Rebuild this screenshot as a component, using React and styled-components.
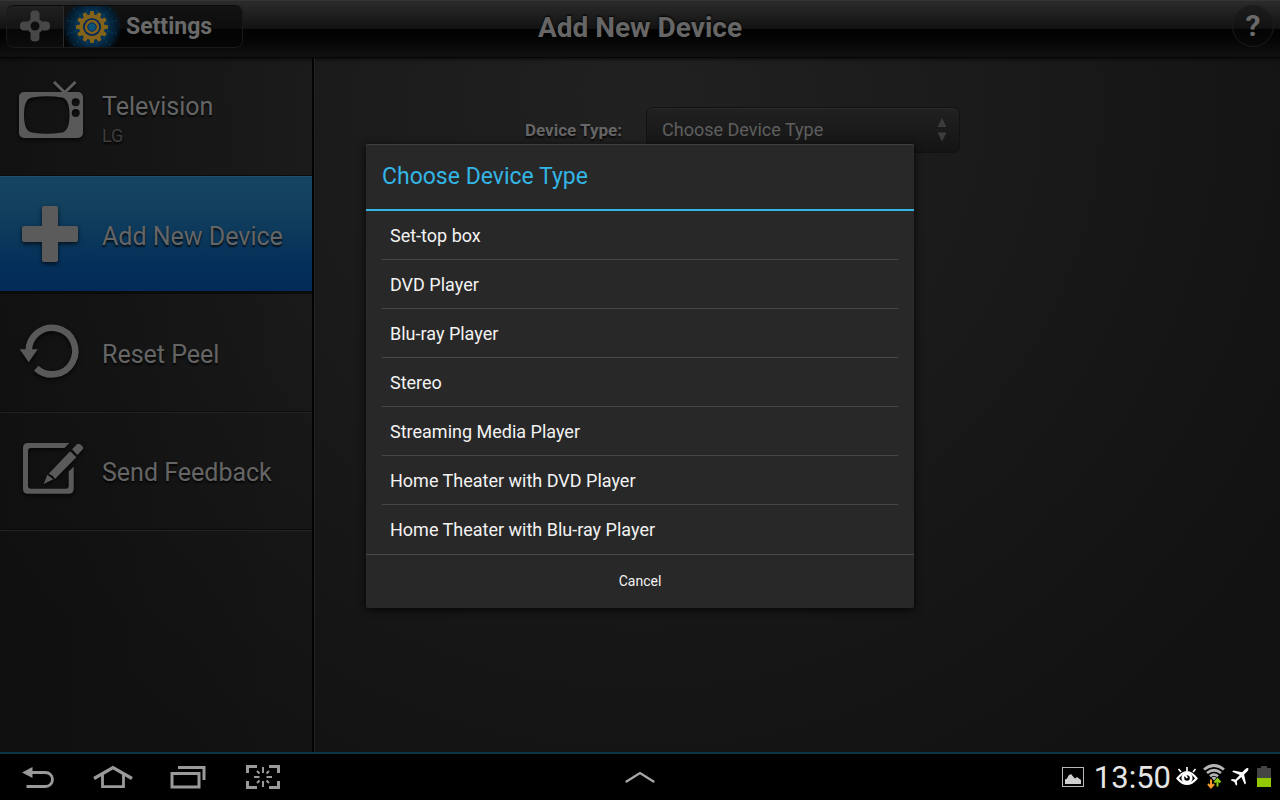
import React from "react";
import styled, { createGlobalStyle } from "styled-components";

const GlobalStyle = createGlobalStyle`
  * {
    box-sizing: border-box;
  }

  body {
    margin: 0;
    background-color: #000;
    font-family: Roboto, "Liberation Sans", sans-serif;
  }

  button,
  select {
    font-family: inherit;
    cursor: pointer;
  }
`;

const Screen = styled.div`
  min-height: 100vh;
  display: flex;
  flex-direction: column;
`;

const AppArea = styled.div`
  flex: 1;
  display: flex;
  flex-direction: column;
  position: relative;
  background: radial-gradient(ellipse at 50% 12%, #212121 0%, #191919 45%, #121212 85%);
`;

/* ---------- header ---------- */

const Header = styled.header`
  display: grid;
  grid-template-columns: 1fr auto 1fr;
  align-items: start;
  height: 58px;
  padding: 4px 6px;
  border-top: 1px solid #343434;
  border-bottom: 1px solid #050505;
  background: linear-gradient(#2b2b2b 0%, #121212 50%, #030303 50%, #030303 64%, #101010 100%);
  box-shadow: 0 1px 4px rgba(0, 0, 0, 0.7);
`;

const Tabs = styled.nav`
  display: flex;
  justify-self: start;
  height: 43px;
  border: 1px solid #1a1a1a;
  border-top-color: #0c0c0c;
  border-radius: 8px;
  overflow: hidden;
`;

const HomeTab = styled.button`
  width: 57px;
  padding: 0 0 1px;
  border: 0;
  border-right: 1px solid #2a2a2a;
  display: flex;
  align-items: center;
  justify-content: center;
  background: linear-gradient(#202020 0%, #131313 56%, #070707 57%, #0c0c0c 100%);
`;

const SettingsTab = styled.button`
  width: 178px;
  padding: 0;
  border: 0;
  display: flex;
  align-items: center;
  gap: 6px;
  font-size: 23px;
  font-weight: 700;
  color: #6a6a6a;
  background: radial-gradient(circle at 28px 21px, #0b4a70 0, #06304f 16px, #041c2e 24px, transparent 30px),
    linear-gradient(#121212 0%, #0d0d0d 56%, #030303 57%, #050505 100%);
`;

const PageTitle = styled.h1`
  margin: 0;
  font-size: 28px;
  line-height: 46px;
  font-weight: 700;
  color: #666;
  text-shadow: 0 -1px 2px #000;
`;

const HelpButton = styled.button`
  justify-self: end;
  width: 42px;
  height: 42px;
  padding: 0;
  border: 1px solid #1c1c1c;
  border-radius: 50%;
  font-size: 30px;
  line-height: 40px;
  font-weight: 700;
  color: #6a6a6a;
  background: linear-gradient(#1c1c1c 0%, #121212 56%, #040404 57%, #080808 100%);
`;

/* ---------- sidebar ---------- */

const Columns = styled.div`
  flex: 1;
  display: grid;
  grid-template-columns: 314px 1fr;
`;

const Sidebar = styled.aside`
  border-right: 2px solid #030303;
  box-shadow: 1px 0 0 #222;
  background: linear-gradient(90deg, rgba(0, 0, 0, 0.14), transparent);
`;

const MenuList = styled.ul`
  margin: 0;
  padding: 0;
  list-style: none;
  border-bottom: 1px solid #242424;
`;

const MenuRow = styled.button`
  width: 100%;
  height: 118px;
  padding: 0 17px;
  display: flex;
  align-items: center;
  gap: 17px;
  text-align: left;
  color: #656565;
  border: 0;
  border-top: 1px solid ${(props) => (props.$active ? "#1f506b" : props.$plain ? "transparent" : "#242424")};
  border-bottom: 1px solid #0b0b0b;
  background: ${(props) =>
    props.$active
      ? "linear-gradient(#154561 0, #123f5c 34px, #05305a 86px, #032b57 114px, #0b0b0b 114px)"
      : "transparent"};

  svg {
    flex: none;
    filter: drop-shadow(0 2px 2px rgba(0, 0, 0, 0.7));
  }
`;

const MenuText = styled.span`
  display: flex;
  flex-direction: column;
  padding-top: 4px;
  text-shadow: 0 2px 2px rgba(0, 0, 0, 0.8);
`;

const MenuName = styled.span`
  font-size: 25px;
  line-height: 34px;
`;

const MenuNote = styled.span`
  font-size: 18px;
  line-height: 24px;
  color: #3d3d3d;
`;

/* ---------- form ---------- */

const Main = styled.main`
  padding: 49px 16px 0;
`;

const Field = styled.div`
  display: flex;
  align-items: center;
  justify-content: center;
  gap: 24px;
  padding-right: 109px;
`;

const FieldLabel = styled.label`
  padding-bottom: 1px;
  font-size: 17px;
  font-weight: 700;
  color: #666;
  text-shadow: 0 2px 2px rgba(0, 0, 0, 0.8);
`;

const SelectBox = styled.div`
  display: grid;
  align-items: center;
  width: 314px;

  > * {
    grid-area: 1 / 1;
  }

  svg {
    justify-self: end;
    margin-right: 13px;
    pointer-events: none;
  }
`;

const Select = styled.select`
  appearance: none;
  width: 100%;
  height: 46px;
  padding: 0 40px 2px 15px;
  border: 1px solid #121212;
  border-radius: 7px;
  font-size: 18px;
  color: #5f5f5f;
  background: linear-gradient(#212121, #141414);
  box-shadow: inset 0 1px 0 #2a2a2a;
`;

/* ---------- dialog ---------- */

const Overlay = styled.div`
  position: absolute;
  inset: 0;
  display: grid;
  place-items: center;
`;

const Dialog = styled.div`
  width: 548px;
  max-width: 100%;
  border-radius: 2px;
  background-color: #282828;
  box-shadow: inset 0 1px 0 #404040, 0 2px 8px rgba(0, 0, 0, 0.8);
`;

const DialogTitle = styled.h2`
  margin: 0;
  padding: 1px 16px 0;
  font-size: 23px;
  line-height: 64px;
  font-weight: 400;
  color: #33b5e5;
  border-bottom: 2px solid #33b5e5;
`;

const Options = styled.ul`
  margin: 0;
  padding: 0 16px;
  list-style: none;
`;

const Option = styled.li`
  border-bottom: 1px solid #484848;

  &:last-child {
    border-color: transparent;
  }
`;

const OptionButton = styled.button`
  width: 100%;
  height: 48px;
  padding: 0 8px;
  border: 0;
  background: none;
  font-size: 18px;
  text-align: left;
  color: #f3f3f3;
`;

const CancelButton = styled.button`
  display: block;
  width: 100%;
  height: 54px;
  padding: 0 0 2px;
  border: 0;
  border-top: 1px solid #484848;
  background: none;
  font-size: 14px;
  color: #f3f3f3;
`;

/* ---------- system bar ---------- */

const SystemBar = styled.footer`
  display: grid;
  grid-template-columns: 1fr auto 1fr;
  align-items: center;
  height: 48px;
  border-top: 2px solid #0b3444;
  background-color: #000;
`;

const NavKeys = styled.div`
  display: flex;
`;

const NavKey = styled.button`
  width: 75px;
  height: 46px;
  padding: 0 0 1px;
  border: 0;
  background: none;
  display: flex;
  align-items: center;
  justify-content: center;
`;

const Status = styled.div`
  display: flex;
  align-items: center;
  justify-self: end;
  gap: 5px;
  padding-right: 9px;
`;

const Clock = styled.time`
  padding: 1px 0 0 5px;
  font-size: 31px;
  line-height: 45px;
  color: #e4e4e4;
`;

/* ---------- icons ---------- */

function PeelIcon() {
  return (
    <svg width="32" height="34" viewBox="0 0 32 34" fill="#474747" aria-hidden="true">
      <rect x="11.500" y="1.500" width="9" height="31" rx="4" />
      <rect x="1" y="12.500" width="30" height="9" rx="4" />
      <rect x="9.500" y="10.500" width="13" height="13" rx="3" />
      <circle cx="16" cy="17" r="4.500" fill="#0e0e0e" />
    </svg>
  );
}

function GearIcon() {
  const teeth = Array.from({ length: 12 }, (_, i) => i * 30);
  return (
    <svg width="56" height="40" viewBox="0 0 56 40" fill="none" aria-hidden="true">
      <g stroke="#0d6a94" strokeWidth="1" strokeDasharray="2 2" opacity=".4">
        {teeth.map((a) => (
          <path key={a} d="M28 4V-6" transform={`rotate(${a + 15} 28 20)`} />
        ))}
      </g>
      <g fill="#83621a">
        {teeth.map((a) => (
          <path key={a} d="M26.300 4h3.400l.9 5h-5.200z" transform={`rotate(${a} 28 20)`} />
        ))}
      </g>
      <circle cx="28" cy="20" r="10.700" stroke="#83621a" strokeWidth="3.800" />
      <circle cx="28" cy="20" r="8.800" fill="#08265a" />
      <circle cx="28" cy="20" r="5.700" fill="#0c5577" stroke="#83621a" strokeWidth="3" />
      <circle cx="28" cy="20" r="4.200" stroke="#08265a" strokeWidth="1" />
    </svg>
  );
}

function TvIcon() {
  return (
    <svg width="68" height="72" viewBox="0 0 68 72" fill="none" aria-hidden="true">
      <path d="M37 1l10.700 10.500L58.500 1" stroke="#5c5c5c" strokeWidth="3" />
      <path
        fillRule="evenodd"
        fill="#595959"
        d="M7 11h54a5 5 0 0 1 5 5v36a5 5 0 0 1-5 5H7a5 5 0 0 1-5-5V16a5 5 0 0 1 5-5zM15 16.500Q7 17.500 7 34t8 17.500q15 2.500 30 0Q52.500 50 52.500 34T45 16.500q-15-2.500-30 0zM58.700 17.300a4 4 0 1 0 0 8 4 4 0 0 0 0-8zm0 10.700a4 4 0 1 0 0 8 4 4 0 0 0 0-8z"
      />
    </svg>
  );
}

function PlusIcon() {
  return (
    <svg width="68" height="72" viewBox="0 0 68 72" fill="#5b5b5b" aria-hidden="true">
      <rect x="25" y="7" width="16" height="56" rx="2" />
      <rect x="5" y="27" width="56" height="16" rx="2" />
    </svg>
  );
}

function ResetIcon() {
  return (
    <svg width="68" height="72" viewBox="0 0 68 72" fill="none" aria-hidden="true">
      <path d="M11.700 34A23.300 23.300 0 1 1 19.200 51.200" stroke="#595959" strokeWidth="6.600" />
      <path d="M2.700 32.300h18l-9 13z" fill="#595959" />
    </svg>
  );
}

function FeedbackIcon() {
  return (
    <svg width="68" height="72" viewBox="0 0 68 72" fill="#5a5a5a" aria-hidden="true">
      <path d="M52.300 8H11q-5 0-5 5v40.700q0 5 5 5h40.700q5 0 5-5V31.700l-5 4.800v14.200q0 3-3 3H14q-3 0-3-3V16q0-3 3-3h33.500z" />
      <path d="M26.700 49l3.600-9.300 6 4.600zM31.700 38.700l20-21q1-1.500 2.300-.8l5.300 5.400L38 44q-2-3.800-6.300-5.300zM55 14.300l5-5q1.700-1.300 3.200 0l2.400 2.300q1.400 1.400 0 3L60.300 20z" />
    </svg>
  );
}

function SpinnerArrows() {
  return (
    <svg width="10" height="24" viewBox="0 0 10 24" fill="#3c3c3c" aria-hidden="true">
      <path d="M5 0l4.500 9H.5zM.5 14.500h9L5 23.500z" />
    </svg>
  );
}

function BackIcon() {
  return (
    <svg width="32" height="24" viewBox="0 0 32 24" fill="none" aria-hidden="true">
      <path d="M8 7.500h15.500a6.800 6.800 0 0 1 0 14H4.500" stroke="#9a9a9a" strokeWidth="2.800" />
      <path d="M0 7.500L10.500 2v11z" fill="#9a9a9a" />
    </svg>
  );
}

function HomeIcon() {
  return (
    <svg width="40" height="24" viewBox="0 0 40 24" fill="none" stroke="#9a9a9a" aria-hidden="true">
      <path d="M1 13.500L20 2.500l19 11" strokeWidth="3.200" />
      <path d="M9.500 9.500v12.200h21V9.500" strokeWidth="2.800" />
    </svg>
  );
}

function RecentsIcon() {
  return (
    <svg width="36" height="24" viewBox="0 0 36 24" fill="none" stroke="#9a9a9a" strokeWidth="3" aria-hidden="true">
      <path d="M2 8.500h27v13.500H2z" />
      <path d="M8 2.500h26V15" />
    </svg>
  );
}

function CaptureIcon() {
  return (
    <svg width="34" height="26" viewBox="0 0 34 26" fill="none" stroke="#9a9a9a" aria-hidden="true">
      <path d="M1.500 9V2.500H11M23 2.500h9.500V9M32.500 17v6.500H23M11 23.500H1.500V17" strokeWidth="3" />
      <path d="M17 3v6M17 17v6M8 13h5.500M20.500 13H26M11 7l2.500 2.500M23 7l-2.500 2.500M11 19l2.500-2.500M23 19l-2.500-2.500" strokeWidth="2" />
    </svg>
  );
}

function ChevronIcon() {
  return (
    <svg width="30" height="12" viewBox="0 0 30 12" fill="none" aria-hidden="true">
      <path d="M1.500 10.500L15 2l13.500 8.500" stroke="#a8a8a8" strokeWidth="2.200" strokeLinecap="round" />
    </svg>
  );
}

function PictureIcon() {
  return (
    <svg width="22" height="20" viewBox="0 0 22 20" fill="none" aria-hidden="true">
      <rect x=".5" y=".5" width="21" height="19" stroke="#b4bab4" />
      <path d="M3 17v-4.500l2-1 1.500-3 2.500-1.500 2.500 3 1.500 1.500 2-1.500 4 3V17z" fill="#cfcfcf" />
    </svg>
  );
}

function EyeIcon() {
  return (
    <svg width="22" height="22" viewBox="0 0 22 22" fill="none" stroke="#fff" aria-hidden="true">
      <path d="M11 1v4M2.500 3l2.500 3M19.500 3L17 6" strokeWidth="1.600" />
      <path d="M1.500 12.500q9.500-13 19 0-9.500 11-19 0z" strokeWidth="2.200" />
      <circle cx="11" cy="12" r="4.200" fill="#000" strokeWidth="2.800" />
      <path d="M9 9l2.300 3" strokeWidth="2" />
    </svg>
  );
}

function WifiIcon() {
  return (
    <svg width="22" height="26" viewBox="0 0 22 26" fill="none" aria-hidden="true">
      <path d="M1 5.500q10-8 20 0M4 9q7-5.500 14 0M7 12.300q4-3.300 8 0" stroke="#b5b5b5" strokeWidth="2.700" />
      <path d="M8.500 13.500q2.500-1.500 5 0L11 16.500z" fill="#b5b5b5" />
      <path d="M8 15.500v7M5 20l3 3.500 3-3.500" stroke="#f79a2e" strokeWidth="2" />
      <path d="M14.500 22.500v-7M11.500 18.500l3-3.500 3 3.500" stroke="#8ccc10" strokeWidth="2" />
    </svg>
  );
}

function PlaneIcon() {
  return (
    <svg width="22" height="20" viewBox="0 0 22 20" fill="#fff" aria-hidden="true">
      <path d="M18.300 1.200q-1.300-.6-2.600.6l-3.600 3.500L3.500 3.500 2.200 4.800l7.600 3.100-4.300 4.700-3.700-.5-1 1.100 3.600 1.800 1.700 3.800 1.100-1-.3-3.700 4.500-4.200 3.300 7.700 1.300-1.300-1.900-8.700 3.600-3.600q1.200-1.500.6-2.800z" />
    </svg>
  );
}

function BatteryIcon() {
  return (
    <svg width="14" height="22" viewBox="0 0 14 22" aria-hidden="true">
      <path d="M4 0h6v2h4v10H0V2h4z" fill="#444" />
      <rect y="12" width="14" height="9" fill="#92c900" />
    </svg>
  );
}

/* ---------- page ---------- */

const menu = [
  { name: "Television", note: "LG", Icon: TvIcon, plain: true },
  { name: "Add New Device", Icon: PlusIcon, active: true },
  { name: "Reset Peel", Icon: ResetIcon, plain: true },
  { name: "Send Feedback", Icon: FeedbackIcon },
];

const deviceTypes = [
  "Set-top box",
  "DVD Player",
  "Blu-ray Player",
  "Stereo",
  "Streaming Media Player",
  "Home Theater with DVD Player",
  "Home Theater with Blu-ray Player",
];

const navKeys = [
  { label: "Back", Icon: BackIcon },
  { label: "Home", Icon: HomeIcon },
  { label: "Recent apps", Icon: RecentsIcon },
  { label: "Screen capture", Icon: CaptureIcon },
];

function DeviceTypeDialog() {
  return (
    <Overlay>
      <Dialog role="dialog" aria-labelledby="dialog-title">
        <DialogTitle id="dialog-title">Choose Device Type</DialogTitle>
        <Options>
          {deviceTypes.map((type) => (
            <Option key={type}>
              <OptionButton type="button">{type}</OptionButton>
            </Option>
          ))}
        </Options>
        <CancelButton type="button">Cancel</CancelButton>
      </Dialog>
    </Overlay>
  );
}

export default function App() {
  return (
    <Screen>
      <GlobalStyle />
      <AppArea>
        <Header>
          <Tabs>
            <HomeTab type="button" aria-label="Peel home">
              <PeelIcon />
            </HomeTab>
            <SettingsTab type="button">
              <GearIcon />
              Settings
            </SettingsTab>
          </Tabs>
          <PageTitle>Add New Device</PageTitle>
          <HelpButton type="button">?</HelpButton>
        </Header>
        <Columns>
          <Sidebar>
            <MenuList>
              {menu.map(({ name, note, Icon, active, plain }) => (
                <li key={name}>
                  <MenuRow type="button" $active={active} $plain={plain}>
                    <Icon />
                    <MenuText>
                      <MenuName>{name}</MenuName>
                      {note && <MenuNote>{note}</MenuNote>}
                    </MenuText>
                  </MenuRow>
                </li>
              ))}
            </MenuList>
          </Sidebar>
          <Main>
            <Field>
              <FieldLabel htmlFor="device-type">Device Type:</FieldLabel>
              <SelectBox>
                <Select id="device-type" defaultValue="">
                  <option value="">Choose Device Type</option>
                  {deviceTypes.map((type) => (
                    <option key={type}>{type}</option>
                  ))}
                </Select>
                <SpinnerArrows />
              </SelectBox>
            </Field>
          </Main>
        </Columns>
        <DeviceTypeDialog />
      </AppArea>
      <SystemBar>
        <NavKeys>
          {navKeys.map(({ label, Icon }) => (
            <NavKey key={label} type="button" aria-label={label}>
              <Icon />
            </NavKey>
          ))}
        </NavKeys>
        <NavKey type="button" aria-label="Open tray">
          <ChevronIcon />
        </NavKey>
        <Status>
          <PictureIcon />
          <Clock>13:50</Clock>
          <EyeIcon />
          <WifiIcon />
          <PlaneIcon />
          <BatteryIcon />
        </Status>
      </SystemBar>
    </Screen>
  );
}
